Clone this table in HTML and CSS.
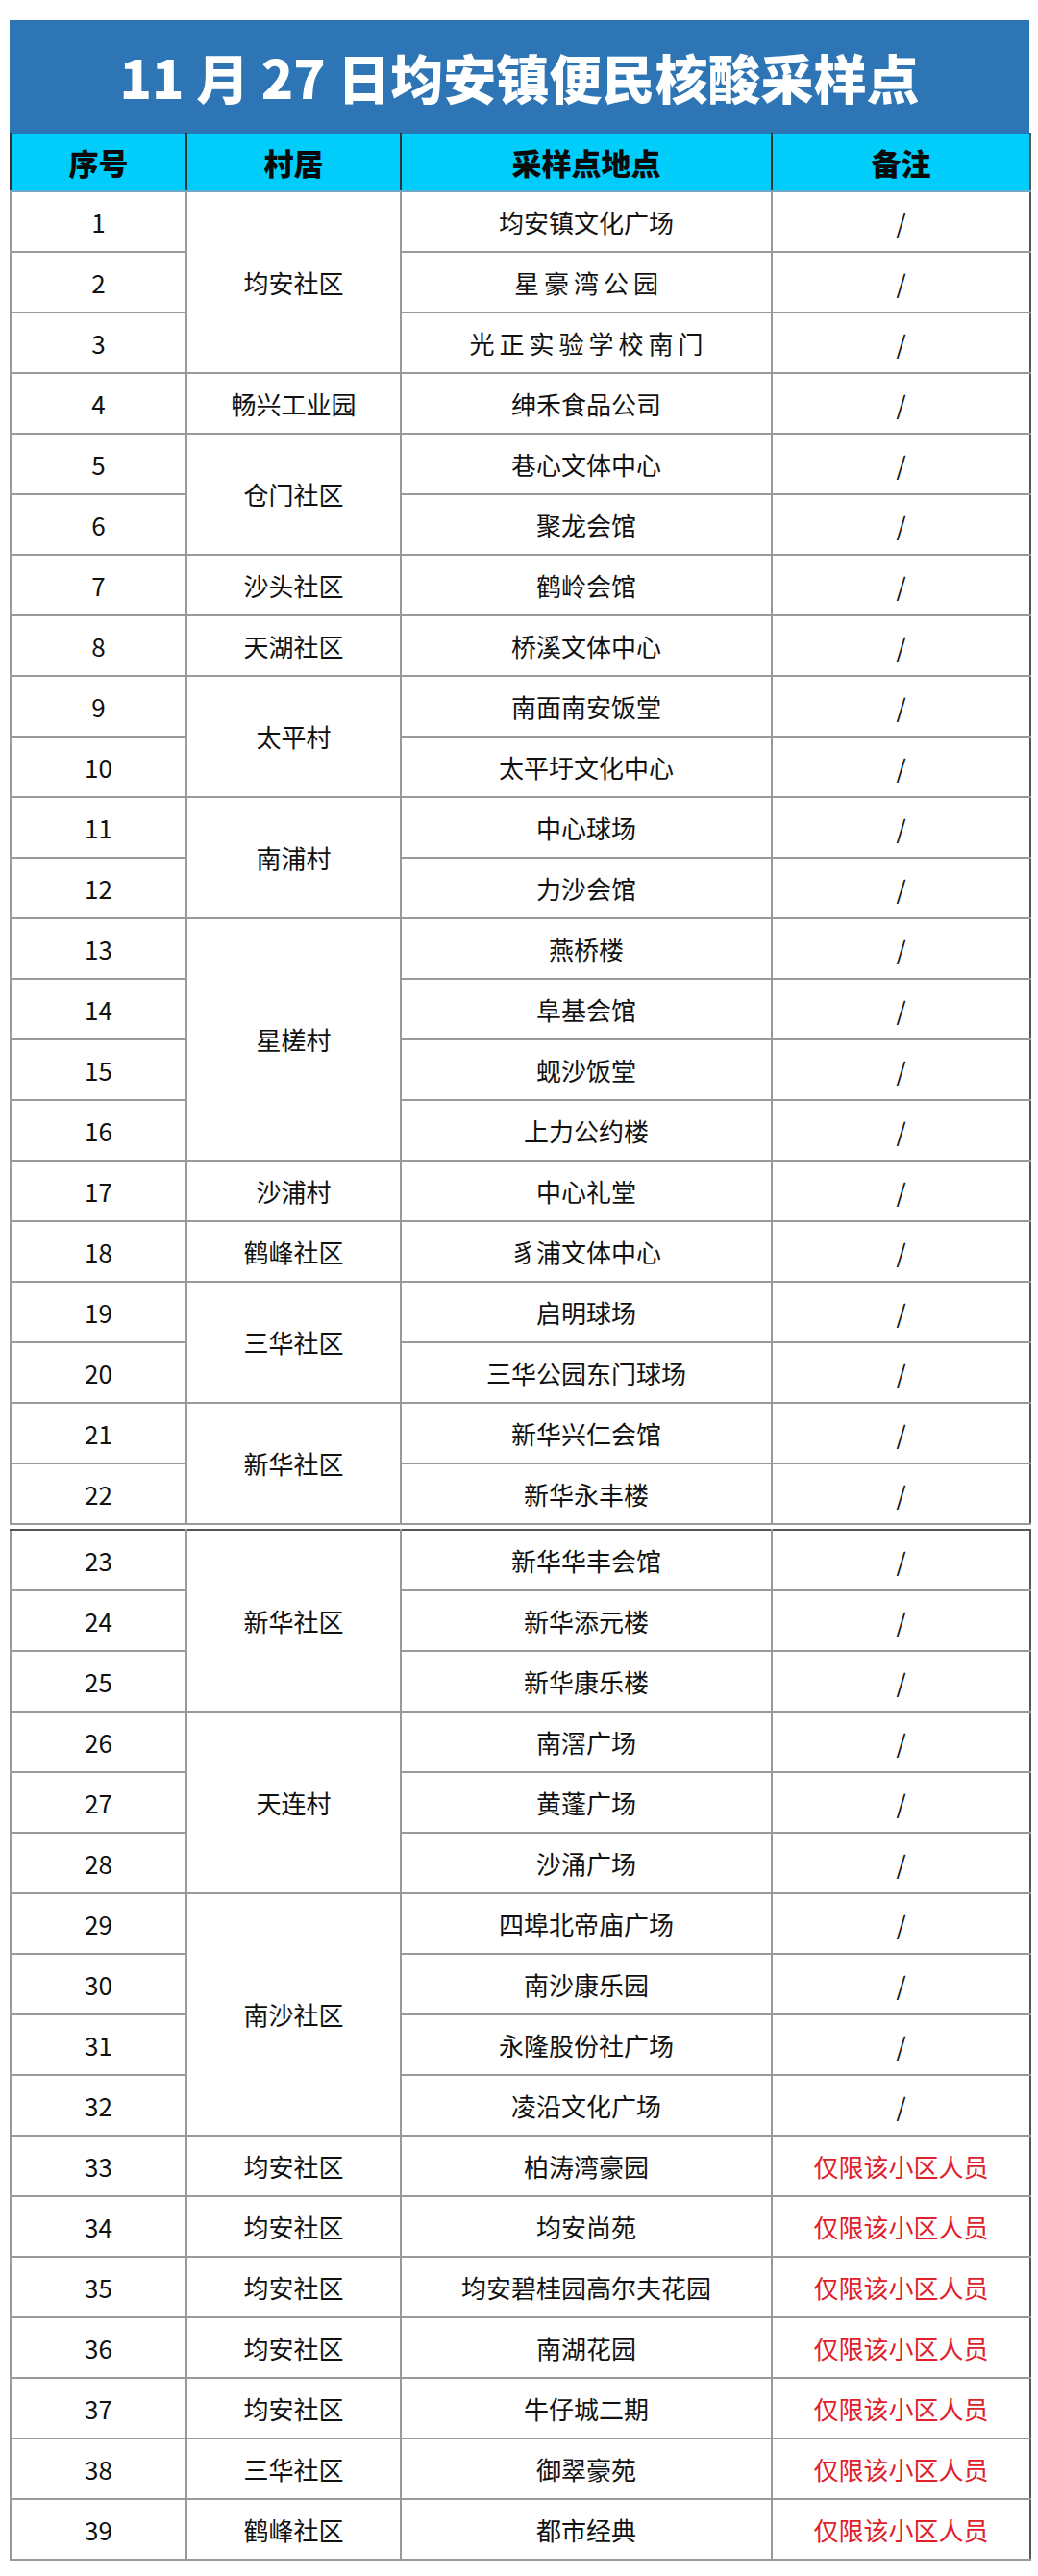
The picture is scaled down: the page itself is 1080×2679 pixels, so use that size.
FILE: index.html
```html
<!DOCTYPE html>
<html lang="zh-CN">
<head>
<meta charset="utf-8">
<title>11月27日均安镇便民核酸采样点</title>
<link rel="stylesheet" href="styles.css">
</head>
<body>
<div class="page">
  <div class="title">11 月 27 日均安镇便民核酸采样点</div>
  <table class="grid top">
    <colgroup><col class="c1"><col class="c2"><col class="c3"><col class="c4"></colgroup>
    <thead>
      <tr class="head"><th>序号</th><th>村居</th><th>采样点地点</th><th class="last">备注</th></tr>
    </thead>
    <tbody>
      <tr><td>1</td><td rowspan="3">均安社区</td><td>均安镇文化广场</td><td class="last">/</td></tr>
      <tr><td>2</td><td class="spaced">星豪湾公园</td><td class="last">/</td></tr>
      <tr><td>3</td><td class="spaced">光正实验学校南门</td><td class="last">/</td></tr>
      <tr><td>4</td><td>畅兴工业园</td><td>绅禾食品公司</td><td class="last">/</td></tr>
      <tr><td>5</td><td rowspan="2">仓门社区</td><td>巷心文体中心</td><td class="last">/</td></tr>
      <tr><td>6</td><td>聚龙会馆</td><td class="last">/</td></tr>
      <tr><td>7</td><td>沙头社区</td><td>鹤岭会馆</td><td class="last">/</td></tr>
      <tr><td>8</td><td>天湖社区</td><td>桥溪文体中心</td><td class="last">/</td></tr>
      <tr><td>9</td><td rowspan="2">太平村</td><td>南面南安饭堂</td><td class="last">/</td></tr>
      <tr><td>10</td><td>太平圩文化中心</td><td class="last">/</td></tr>
      <tr><td>11</td><td rowspan="2">南浦村</td><td>中心球场</td><td class="last">/</td></tr>
      <tr><td>12</td><td>力沙会馆</td><td class="last">/</td></tr>
      <tr><td>13</td><td rowspan="4">星槎村</td><td>燕桥楼</td><td class="last">/</td></tr>
      <tr><td>14</td><td>阜基会馆</td><td class="last">/</td></tr>
      <tr><td>15</td><td>蚬沙饭堂</td><td class="last">/</td></tr>
      <tr><td>16</td><td>上力公约楼</td><td class="last">/</td></tr>
      <tr><td>17</td><td>沙浦村</td><td>中心礼堂</td><td class="last">/</td></tr>
      <tr><td>18</td><td>鹤峰社区</td><td>豸浦文体中心</td><td class="last">/</td></tr>
      <tr><td>19</td><td rowspan="2">三华社区</td><td>启明球场</td><td class="last">/</td></tr>
      <tr><td>20</td><td>三华公园东门球场</td><td class="last">/</td></tr>
      <tr><td>21</td><td rowspan="2" class="upper">新华社区</td><td>新华兴仁会馆</td><td class="last">/</td></tr>
      <tr><td>22</td><td>新华永丰楼</td><td class="last">/</td></tr>
    </tbody>
  </table>
  <table class="grid bottom">
    <colgroup><col class="c1"><col class="c2"><col class="c3"><col class="c4"></colgroup>
    <tbody>
      <tr><td>23</td><td rowspan="3">新华社区</td><td>新华华丰会馆</td><td class="last">/</td></tr>
      <tr><td>24</td><td>新华添元楼</td><td class="last">/</td></tr>
      <tr><td>25</td><td>新华康乐楼</td><td class="last">/</td></tr>
      <tr><td>26</td><td rowspan="3">天连村</td><td>南滘广场</td><td class="last">/</td></tr>
      <tr><td>27</td><td>黄蓬广场</td><td class="last">/</td></tr>
      <tr><td>28</td><td>沙涌广场</td><td class="last">/</td></tr>
      <tr><td>29</td><td rowspan="4">南沙社区</td><td>四埠北帝庙广场</td><td class="last">/</td></tr>
      <tr><td>30</td><td>南沙康乐园</td><td class="last">/</td></tr>
      <tr><td>31</td><td>永隆股份社广场</td><td class="last">/</td></tr>
      <tr><td>32</td><td>凌沿文化广场</td><td class="last">/</td></tr>
      <tr><td>33</td><td>均安社区</td><td>柏涛湾豪园</td><td class="last red">仅限该小区人员</td></tr>
      <tr><td>34</td><td>均安社区</td><td>均安尚苑</td><td class="last red">仅限该小区人员</td></tr>
      <tr><td>35</td><td>均安社区</td><td>均安碧桂园高尔夫花园</td><td class="last red">仅限该小区人员</td></tr>
      <tr><td>36</td><td>均安社区</td><td>南湖花园</td><td class="last red">仅限该小区人员</td></tr>
      <tr><td>37</td><td>均安社区</td><td>牛仔城二期</td><td class="last red">仅限该小区人员</td></tr>
      <tr><td>38</td><td>三华社区</td><td>御翠豪苑</td><td class="last red">仅限该小区人员</td></tr>
      <tr><td>39</td><td>鹤峰社区</td><td>都市经典</td><td class="last red">仅限该小区人员</td></tr>
    </tbody>
  </table>
</div>
</body>
</html>
```

FILE: styles.css
```css
html, body {
  margin: 0;
  padding: 0;
  background: #ffffff;
}

body {
  font-family: "Noto Sans CJK SC", "Noto Sans", sans-serif;
  color: #111111;
}

.page {
  width: 1061px;
  padding: 21px 0 0 10px;
}

.title {
  height: 117px;
  background: #2e75b6;
  color: #ffffff;
  font-size: 55px;
  font-weight: 900;
  line-height: 117px;
  text-align: center;
}

.grid {
  width: 1061px;
  border-collapse: collapse;
  table-layout: fixed;
}

.c1 { width: 183px; }
.c2 { width: 223px; }
.c3 { width: 386px; }
.c4 { width: 269px; }

.grid td,
.grid th {
  padding: 0;
  text-align: center;
  vertical-align: middle;
  border: 2px solid #9a9a9a;
  font-size: 26px;
  font-weight: 400;
  line-height: 30px;
  white-space: nowrap;
}

.grid tbody tr {
  height: 63px;
}

.grid td.last,
.grid th.last {
  border-left-color: #444444;
  border-right-color: #555555;
}

.head th {
  height: 59px;
  background: #00cdfa;
  font-size: 31px;
  font-weight: 900;
  color: #0a0a0a;
  border-top: 1px solid #2e75b6;
  border-left-color: #333333;
  border-right-color: #333333;
  border-bottom: 2px solid #6fa8c8;
}

.spaced {
  letter-spacing: 5px;
  text-indent: 5px;
}

.red {
  color: #e0202a;
}

.bottom {
  margin-top: 4px;
}

.bottom tr:first-child td {
  border-top-color: #555555;
}
```
